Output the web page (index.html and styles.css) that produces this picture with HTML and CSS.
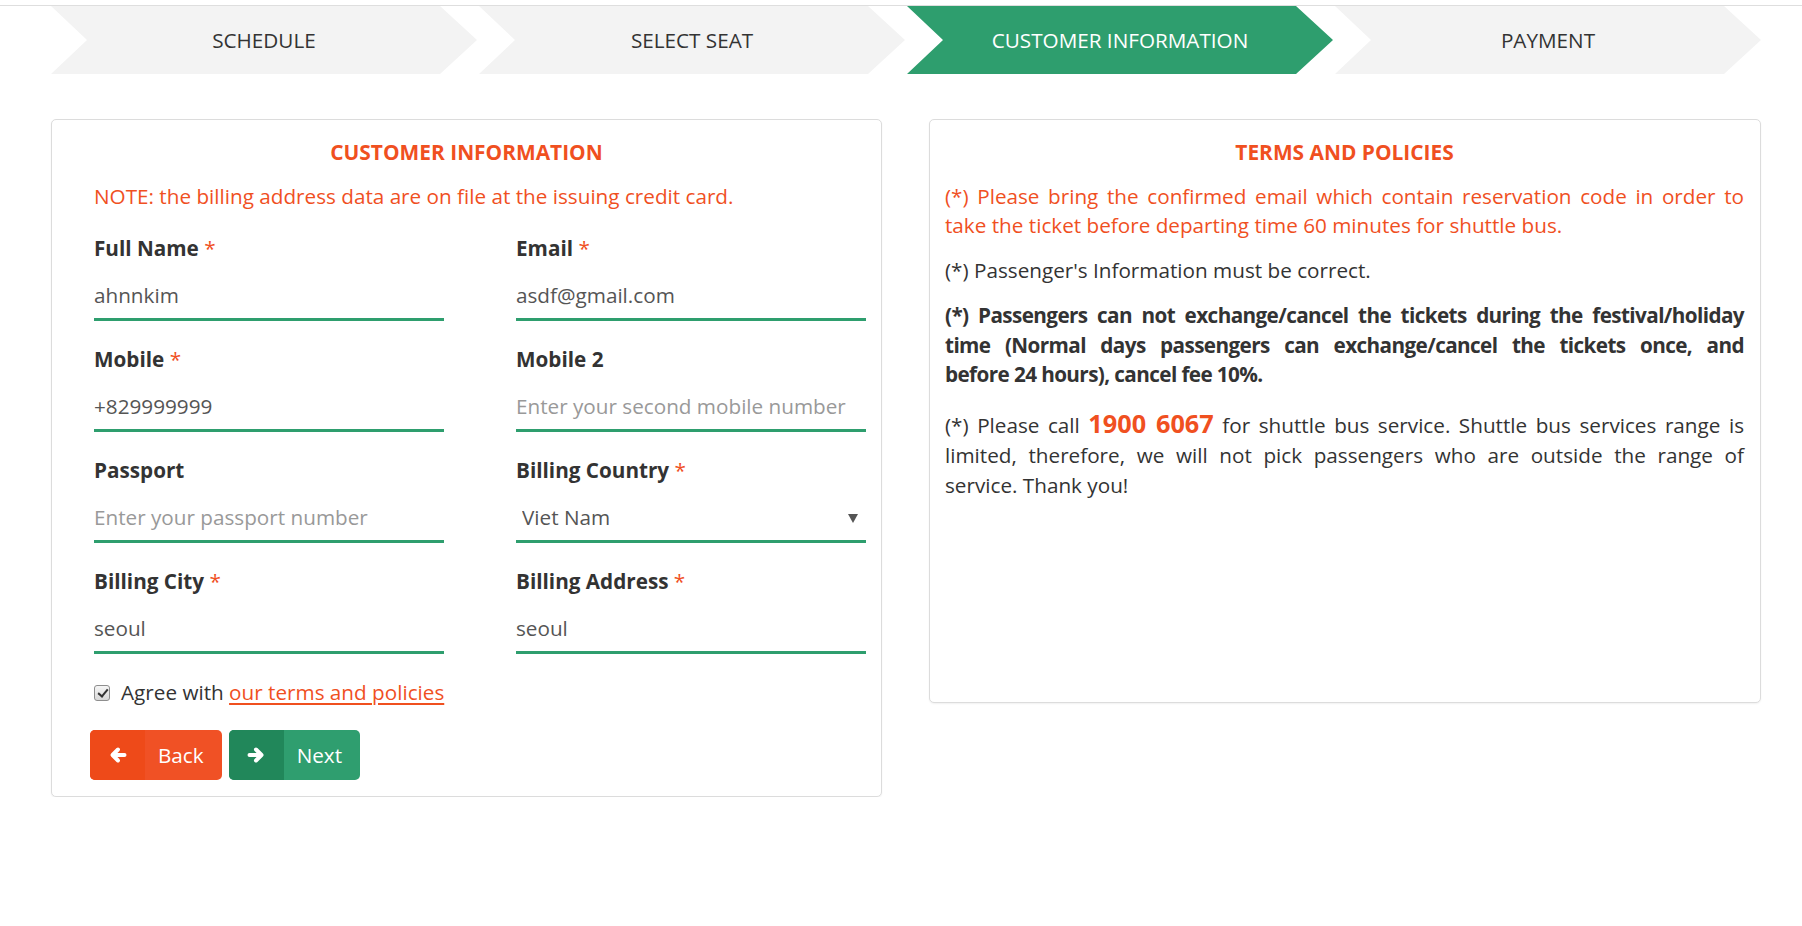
FILE: index.html
```html
<!DOCTYPE html>
<html lang="en">
<head>
<meta charset="utf-8">
<title>Customer Information</title>
<link rel="stylesheet" href="styles.css">
</head>
<body>
<div class="topbar"></div>
<div class="page">
  <ol class="steps">
    <li class="step">SCHEDULE</li>
    <li class="step">SELECT SEAT</li>
    <li class="step active">CUSTOMER INFORMATION</li>
    <li class="step">PAYMENT</li>
  </ol>

  <div class="cards">
    <section class="card card-form">
      <h3 class="card-title">CUSTOMER INFORMATION</h3>
      <div class="form-body">
        <p class="note">NOTE: the billing address data are on file at the issuing credit card.</p>
        <div class="form-grid">
          <div class="field">
            <label class="field-label">Full Name <span class="req">*</span></label>
            <input class="field-input" type="text" value="ahnnkim">
          </div>
          <div class="field">
            <label class="field-label">Email <span class="req">*</span></label>
            <input class="field-input" type="text" value="asdf@gmail.com">
          </div>
          <div class="field">
            <label class="field-label">Mobile <span class="req">*</span></label>
            <input class="field-input" type="text" value="+829999999">
          </div>
          <div class="field">
            <label class="field-label">Mobile 2</label>
            <input class="field-input" type="text" placeholder="Enter your second mobile number">
          </div>
          <div class="field">
            <label class="field-label">Passport</label>
            <input class="field-input" type="text" placeholder="Enter your passport number">
          </div>
          <div class="field">
            <label class="field-label">Billing Country <span class="req">*</span></label>
            <div class="select-wrap">
              <select class="field-input field-select">
                <option>Viet Nam</option>
              </select>
            </div>
          </div>
          <div class="field">
            <label class="field-label">Billing City <span class="req">*</span></label>
            <input class="field-input" type="text" value="seoul">
          </div>
          <div class="field">
            <label class="field-label">Billing Address <span class="req">*</span></label>
            <input class="field-input" type="text" value="seoul">
          </div>
        </div>
        <label class="agree"><input class="agree-box" type="checkbox" checked><span>Agree with <a class="agree-link" href="#">our terms and policies</a></span></label>
      </div>
      <div class="actions">
        <button class="btn btn-back" type="button">
          <span class="btn-icon"><svg width="18" height="18" viewBox="0 0 18 18"><path d="M15.5 9H4M9 3.5L3.5 9L9 14.5" fill="none" stroke="#fff" stroke-width="4" stroke-linecap="round" stroke-linejoin="round"/></svg></span>
          <span class="btn-text">Back</span>
        </button>
        <button class="btn btn-next" type="button">
          <span class="btn-icon"><svg width="18" height="18" viewBox="0 0 18 18"><path d="M2.5 9H14M9 3.5L14.5 9L9 14.5" fill="none" stroke="#fff" stroke-width="4" stroke-linecap="round" stroke-linejoin="round"/></svg></span>
          <span class="btn-text">Next</span>
        </button>
      </div>
    </section>

    <section class="card card-terms">
      <h3 class="card-title">TERMS AND POLICIES</h3>
      <p class="terms terms-warn">(*) Please bring the confirmed email which contain reservation code in order to take the ticket before departing time 60 minutes for shuttle bus.</p>
      <p class="terms">(*) Passenger's Information must be correct.</p>
      <p class="terms terms-strong"><span class="terms-line">(*) Passengers can not exchange/cancel the tickets during the festival/holiday</span><span class="terms-line">time (Normal days passengers can exchange/cancel the tickets once, and</span>before 24 hours), cancel fee 10%.</p>
      <p class="terms">(*) Please call <span class="hotline">1900 6067</span> for shuttle bus service. Shuttle bus services range is limited, therefore, we will not pick passengers who are outside the range of service. Thank you!</p>
    </section>
  </div>
</div>
</body>
</html>
```

FILE: styles.css
```css
* { box-sizing: border-box; }

html, body {
  margin: 0;
  padding: 0;
  background: #fff;
}

body {
  font-family: "Open Sans", "Noto Sans", "Liberation Sans", sans-serif;
  font-size: 20.7px;
  line-height: 1.42857;
  color: #333;
}

.topbar {
  height: 6px;
  border-bottom: 1px solid #dedede;
}

.page {
  width: 1710px;
  margin-left: 51px;
}

/* ---------- steps ---------- */
.steps {
  list-style: none;
  margin: 0;
  padding: 0;
  display: flex;
  gap: 2px;
  height: 68px;
}

.step {
  flex: 1 1 0;
  height: 68px;
  line-height: 68px;
  text-align: center;
  background: #f3f3f3;
  color: #333;
  font-size: 20.7px;
  clip-path: polygon(0 0, calc(100% - 37px) 0, 100% 50%, calc(100% - 37px) 100%, 0 100%, 36px 50%);
}

.step.active {
  background: #2e9e6e;
  color: #fff;
}

/* ---------- cards ---------- */
.cards {
  display: grid;
  grid-template-columns: 831px 832px;
  column-gap: 47px;
  align-items: start;
  margin-top: 45px;
}

.card {
  border: 1px solid #dcdcdc;
  border-radius: 5px;
  box-shadow: 0 1px 2px rgba(0, 0, 0, 0.06);
  background: #fff;
}

.card-form {
  padding: 17px 15px 16px 15px;
}

.card-terms {
  height: 584px;
  padding: 17px 16px 0 15px;
}

.card-title {
  margin: 0 0 14.7px;
  font-size: 20.9px;
  line-height: 30px;
  font-weight: 700;
  text-align: center;
  color: #f0501f;
}

.form-body {
  padding-left: 27px;
}

.note {
  margin: 0 0 23px;
  color: #f0501f;
}

.form-grid {
  display: grid;
  grid-template-columns: 350px 350px;
  column-gap: 72px;
  row-gap: 24.4px;
  margin-bottom: 24.4px;
}

.field {
  display: flex;
  flex-direction: column;
}

.field-label {
  font-weight: 700;
  line-height: 29.6px;
  margin-bottom: 10px;
  color: #333;
}

.req {
  color: #f0501f;
  font-weight: 400;
}

.field-input {
  display: block;
  width: 100%;
  height: 47px;
  margin: 0;
  padding: 0 0 2px 0;
  border: none;
  border-bottom: 3px solid #2e9e6e;
  border-radius: 0;
  background: transparent;
  font-family: inherit;
  font-size: 20.7px;
  color: #555;
  outline: none;
}

.field-input::placeholder {
  color: #999;
}

.select-wrap {
  position: relative;
}

.field-select {
  appearance: none;
  -webkit-appearance: none;
  padding-left: 6px;
}

.select-wrap::after {
  content: "";
  position: absolute;
  right: 8px;
  top: 18px;
  width: 0;
  height: 0;
  border-left: 5px solid transparent;
  border-right: 5px solid transparent;
  border-top: 9px solid #555;
  pointer-events: none;
}

.agree {
  display: flex;
  align-items: center;
  line-height: 29.6px;
  margin-bottom: 22px;
}

.agree-box {
  appearance: none;
  -webkit-appearance: none;
  position: relative;
  width: 16px;
  height: 16px;
  margin: 1px 11px 0 0;
  border: 1px solid #8e8e8e;
  border-radius: 3px;
  background: linear-gradient(#f6f6f6, #d8d8d8);
}

.agree-box:checked::after {
  content: "";
  position: absolute;
  left: 4.5px;
  top: 1px;
  width: 4px;
  height: 8px;
  border: solid #333;
  border-width: 0 2.5px 2.5px 0;
  transform: rotate(40deg);
}

.agree-link {
  color: #f0501f;
  text-decoration: underline;
  text-decoration-thickness: 1.5px;
  text-underline-offset: 3px;
}

/* ---------- buttons ---------- */
.actions {
  display: flex;
  gap: 7px;
  margin-left: 23px;
}

.btn {
  display: inline-flex;
  align-items: stretch;
  height: 50px;
  padding: 0;
  border: none;
  border-radius: 5px;
  overflow: hidden;
  font-family: inherit;
  font-size: 20.7px;
  color: #fff;
  cursor: pointer;
}

.btn-icon {
  width: 55px;
  display: flex;
  align-items: center;
  justify-content: center;
}

.btn-text {
  display: flex;
  align-items: center;
  padding: 0 18px 0 13px;
}

.btn-back { background: #f05125; }
.btn-back .btn-icon { background: #ee4a19; }

.btn-next { background: #2f9e6f; }
.btn-next .btn-icon { background: #21875a; }

/* ---------- terms ---------- */
.terms {
  margin: 0 0 15.3px;
  text-align: justify;
}

.terms-warn {
  color: #f0501f;
}

.terms-strong {
  font-weight: 700;
  letter-spacing: -0.6px;
}

.terms-line {
  display: block;
  white-space: nowrap;
  text-align: justify;
  text-align-last: justify;
}

.hotline {
  font-size: 25.3px;
  font-weight: 700;
  color: #f0501f;
}
```
